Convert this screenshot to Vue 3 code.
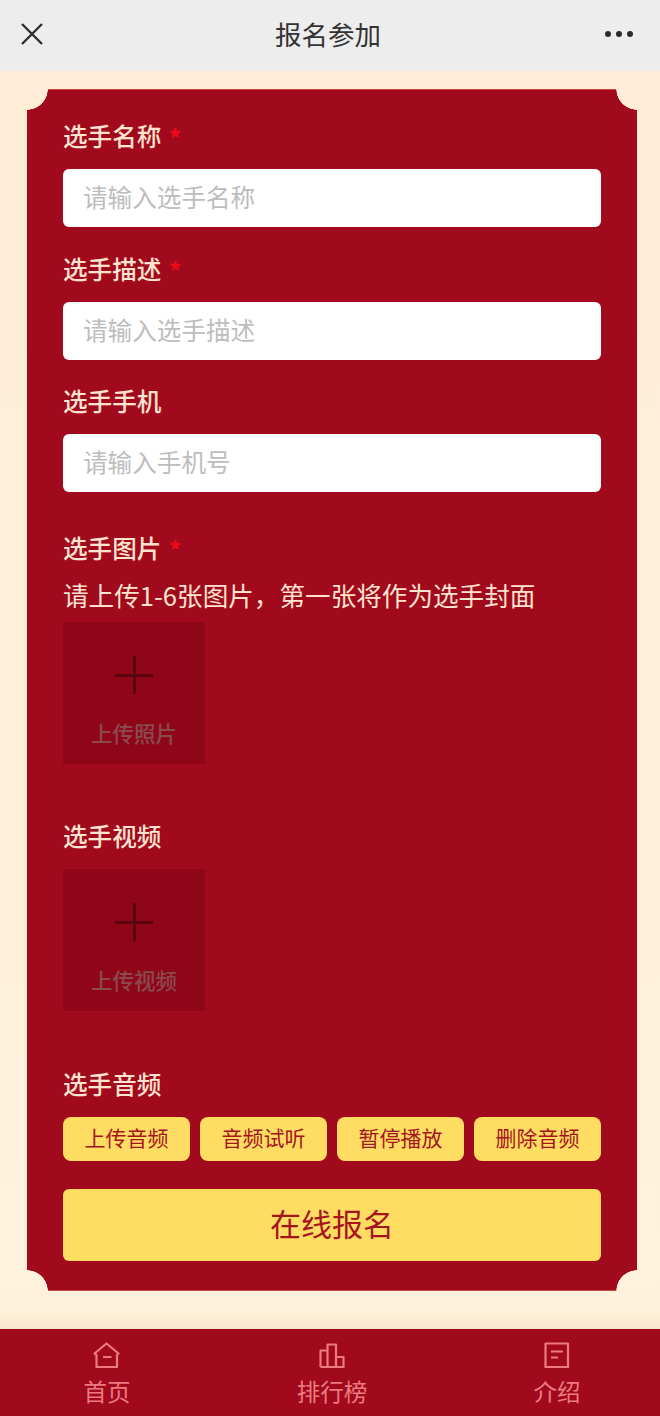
<script setup>
const audioButtons = ['上传音频', '音频试听', '暂停播放', '删除音频']
</script>

<template>
  <div class="page">
    <header class="nav">
      <svg class="close" viewBox="0 0 24 24" width="24" height="24"><path d="M2 2 L22 22 M22 2 L2 22" /></svg>
      <span class="nav-title">报名参加</span>
      <span class="dots"><i></i><i></i><i></i></span>
    </header>

    <main class="content">
      <form class="card" @submit.prevent>
        <div class="label">选手名称 <em>*</em></div>
        <div class="input">请输入选手名称</div>
        <div class="label desc">选手描述 <em>*</em></div>
        <div class="input">请输入选手描述</div>
        <div class="label phone">选手手机</div>
        <div class="input">请输入手机号</div>

        <div class="label wide">选手图片 <em>*</em></div>
        <div class="hint">请上传1-6张图片，第一张将作为选手封面</div>
        <div class="upload first">
          <span class="plus"></span>
          <span class="upload-text">上传照片</span>
        </div>

        <div class="label media">选手视频</div>
        <div class="upload">
          <span class="plus"></span>
          <span class="upload-text">上传视频</span>
        </div>

        <div class="label audio-label">选手音频</div>
        <div class="audio">
          <button v-for="b in audioButtons" :key="b" type="button" class="audio-btn">{{ b }}</button>
        </div>
        <button type="submit" class="submit">在线报名</button>
      </form>
    </main>

    <nav class="tabs">
      <div class="tab">
        <svg viewBox="0 0 28 26" width="28" height="26"><path d="M13.5 1.5 L25.5 11.5 L24 13 V25 H3.5 V13 L1.5 11.5 Z M10 15 H18.5" /></svg>
        <span>首页</span>
      </div>
      <div class="tab">
        <svg viewBox="0 0 28 26" width="28" height="26"><path d="M2.5 25 V8.5 H9.5 V25 M9.5 25 V2.5 H18 V25 M18 15 H25.5 V25 H2.5" /></svg>
        <span>排行榜</span>
      </div>
      <div class="tab">
        <svg viewBox="0 0 28 26" width="28" height="26"><path d="M2.5 1.5 H25 V25 H2.5 Z M8 9.5 H20 M8 15.5 H15" /></svg>
        <span>介绍</span>
      </div>
    </nav>
  </div>
</template>

<style>
html, body { margin: 0; padding: 0; }
</style>

<style scoped>
.page {
  width: 660px;
  height: 1416px;
  display: flex;
  flex-direction: column;
  overflow: hidden;
  background: linear-gradient(180deg, #ffecd6 0%, #ffefd9 50%, #fff2dc 90%, #fff1da 92.5%, #fae5cb 94%);
  font-family: "Noto Sans CJK SC", "Noto Sans", sans-serif;
}
.nav {
  height: 71px;
  flex: none;
  background: #ededed;
  display: flex;
  align-items: center;
  justify-content: space-between;
  padding: 0 27px 3px 20px;
  box-sizing: border-box;
}
.close { fill: none; stroke: #2f2f2f; stroke-width: 2.4; }
.nav-title { font-size: 26.5px; color: #333; line-height: 36px; margin: 0 0 1px 7px; }
.dots { display: flex; gap: 5px; }
.dots i { width: 6px; height: 6px; border-radius: 50%; background: #2b2b2b; }
.content { flex: 1; padding: 18px 23px 0 27px; }
.card {
  position: relative;
  height: 1202px;
  box-sizing: border-box;
  padding: 29px 36px 0;
  background:
    radial-gradient(circle 21px at 0 0, transparent 20.5px, #a00a1c 21px) top left / 51% 51% no-repeat,
    radial-gradient(circle 21px at 100% 0, transparent 20.5px, #a00a1c 21px) top right / 51% 51% no-repeat,
    radial-gradient(circle 21px at 0 100%, transparent 20.5px, #a00a1c 21px) bottom left / 51% 51% no-repeat,
    radial-gradient(circle 21px at 100% 100%, transparent 20.5px, #a00a1c 21px) bottom right / 51% 51% no-repeat;
}
.card::before, .card::after {
  content: "";
  position: absolute;
  left: 21px;
  right: 21px;
  height: 1px;
  background: #c9483f;
}
.card::before { top: 0; }
.card::after { bottom: 0; }
.label {
  font-size: 24.6px;
  font-weight: 500;
  line-height: 34px;
  color: #ffe3d0;
}
.label em { color: #ee0a1a; font-style: normal; font-weight: 700; line-height: 0; margin-left: 2px; vertical-align: -2px; }
.label.desc { margin-top: 24.5px; }
.label.phone { margin-top: 23.5px; }
.label.wide { margin-top: 38.5px; }
.label.media { margin-top: 54px; }
.label.audio-label { margin-top: 55px; }
.input {
  height: 57.5px;
  margin-top: 17px;
  padding-left: 20px;
  box-sizing: border-box;
  border-radius: 6px;
  background: #fff;
  color: #bdbdbd;
  font-size: 24.6px;
  line-height: 55px;
}
.hint {
  margin-top: 14px;
  font-size: 25.6px;
  line-height: 34px;
  color: #ffe3d0;
}
.upload {
  width: 142px;
  height: 142px;
  margin-top: 17px;
  background: #900619;
  display: flex;
  flex-direction: column;
  align-items: center;
}
.upload.first { margin-top: 10px; }
.plus {
  position: relative;
  width: 38px;
  height: 38px;
  margin-top: 34px;
}
.plus::before, .plus::after {
  content: "";
  position: absolute;
  background: #5c0310;
}
.plus::before { left: 0; right: 0; top: 18px; height: 2.5px; }
.plus::after { top: 0; bottom: 0; left: 18px; width: 2.5px; }
.upload-text {
  margin-top: 23px;
  font-size: 21.5px;
  font-weight: 500;
  line-height: 32px;
  color: #8b4a4e;
}
.audio {
  display: grid;
  grid-template-columns: repeat(4, 1fr);
  gap: 10px;
  margin-top: 17px;
}
.audio-btn, .submit {
  border: 0;
  padding: 0;
  background: #ffdd62;
  color: #a6141e;
  font-family: inherit;
}
.audio-btn {
  height: 44px;
  padding-bottom: 4px;
  border-radius: 8px;
  font-size: 21px;
}
.submit {
  display: block;
  width: 100%;
  height: 72px;
  padding-bottom: 6px;
  margin-top: 28px;
  border-radius: 6px;
  font-size: 31px;
}
.tabs {
  height: 87px;
  flex: none;
  background: #a00a1c;
  display: grid;
  grid-template-columns: repeat(3, 225px);
  justify-content: center;
  padding-left: 4px;
  box-sizing: border-box;
}
.tab {
  display: flex;
  flex-direction: column;
  align-items: center;
  padding-top: 13px;
  color: #ec7a80;
  font-size: 23.5px;
  line-height: 34px;
}
.tab svg { fill: none; stroke: #ec7a80; stroke-width: 2.2; stroke-linejoin: round; margin-bottom: 6px; }
</style>
